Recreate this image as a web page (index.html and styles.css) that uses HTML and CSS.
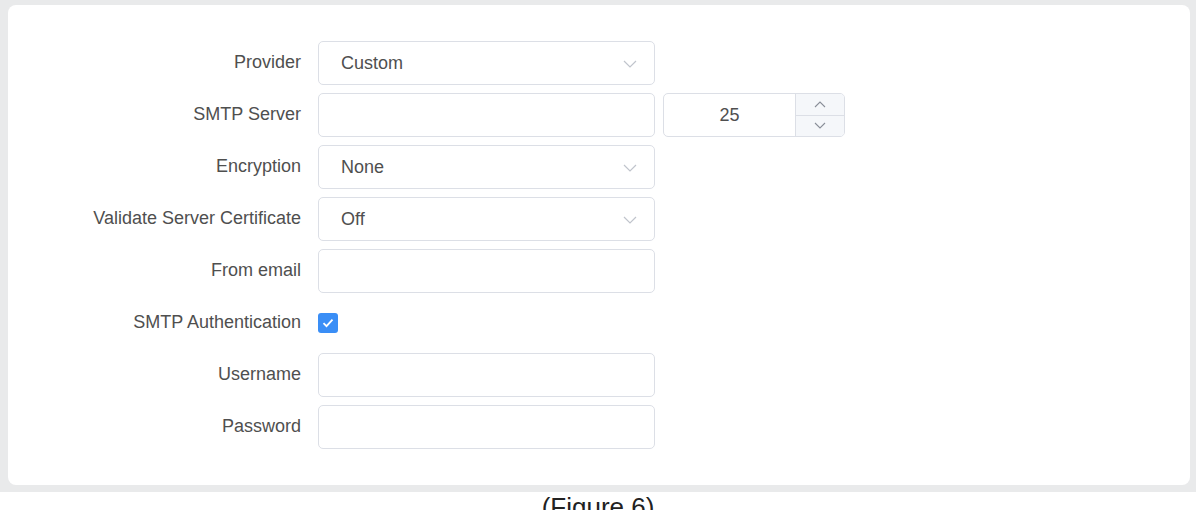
FILE: index.html
```html
<!DOCTYPE html>
<html lang="en">
<head>
    <meta charset="UTF-8">
    <title>SMTP Settings</title>
    <link rel="stylesheet" href="styles.css">
</head>
<body>
<div class="frame">
    <div class="card">
        <form class="form">
            <label class="label">Provider</label>
            <div class="field select">
                <span>Custom</span>
                <svg class="chev" width="14" height="8" viewBox="0 0 14 8"><path d="M1 1l6 6 6-6" fill="none" stroke="#c0c4cc" stroke-width="1.2"/></svg>
            </div>

            <label class="label">SMTP Server</label>
            <div class="row">
                <div class="field wide"></div>
                <div class="field port">
                    <span class="port-val">25</span>
                    <div class="spin">
                        <div class="spin-btn">
                            <svg width="12" height="7" viewBox="0 0 12 7"><path d="M1 6l5-5 5 5" fill="none" stroke="#8a8f99" stroke-width="1.1"/></svg>
                        </div>
                        <div class="spin-btn">
                            <svg width="12" height="7" viewBox="0 0 12 7"><path d="M1 1l5 5 5-5" fill="none" stroke="#8a8f99" stroke-width="1.1"/></svg>
                        </div>
                    </div>
                </div>
            </div>

            <label class="label">Encryption</label>
            <div class="field select">
                <span>None</span>
                <svg class="chev" width="14" height="8" viewBox="0 0 14 8"><path d="M1 1l6 6 6-6" fill="none" stroke="#c0c4cc" stroke-width="1.2"/></svg>
            </div>

            <label class="label">Validate Server Certificate</label>
            <div class="field select">
                <span>Off</span>
                <svg class="chev" width="14" height="8" viewBox="0 0 14 8"><path d="M1 1l6 6 6-6" fill="none" stroke="#c0c4cc" stroke-width="1.2"/></svg>
            </div>

            <label class="label">From email</label>
            <div class="field"></div>

            <label class="label">SMTP Authentication</label>
            <div class="check-cell">
                <span class="check">
                    <svg width="12" height="10" viewBox="0 0 12 10"><path d="M1.5 5.2l3 3 6-6.5" fill="none" stroke="#fff" stroke-width="1.8"/></svg>
                </span>
            </div>

            <label class="label">Username</label>
            <div class="field"></div>

            <label class="label">Password</label>
            <div class="field"></div>
        </form>
    </div>
</div>
<p class="caption">(Figure 6)</p>
</body>
</html>
```

FILE: styles.css
```css
body {
    margin: 0;
    background: #fff;
    font-family: "Liberation Sans", Arial, Helvetica, sans-serif;
    color: #555;
}

.frame {
    background: #e9eaeb;
    padding: 5px 6px 7px 8px;
}

.card {
    background: #fff;
    border-radius: 8px;
    padding: 36px 0 36px 0;
}

.form {
    display: grid;
    grid-template-columns: 293px auto;
    grid-auto-rows: 44px;
    column-gap: 17px;
    row-gap: 8px;
    align-items: center;
}

.label {
    text-align: right;
    font-size: 18px;
    color: #4f4f4f;
    margin-top: -2px;
}

.field {
    width: 337px;
    height: 44px;
    box-sizing: border-box;
    border: 1px solid #dcdfe6;
    border-radius: 5px;
    background: #fff;
    font-size: 18px;
    color: #4f4f4f;
}

.select {
    display: flex;
    align-items: center;
    justify-content: space-between;
    padding: 0 17px 0 22px;
}

.chev {
    margin-top: 1px;
}

.row {
    display: flex;
    gap: 8px;
}

.port {
    width: 182px;
    display: flex;
    overflow: hidden;
}

.port-val {
    flex: 1;
    display: flex;
    align-items: center;
    justify-content: center;
}

.spin {
    width: 48px;
    display: flex;
    flex-direction: column;
    border-left: 1px solid #dcdfe6;
    background: #f5f7fa;
}

.spin-btn {
    flex: 1;
    display: flex;
    align-items: center;
    justify-content: center;
}

.spin-btn + .spin-btn {
    border-top: 1px solid #dcdfe6;
}

.check-cell {
    display: flex;
    align-items: center;
}

.check {
    width: 20px;
    height: 20px;
    border-radius: 3px;
    background: #3a8ef6;
    display: flex;
    align-items: center;
    justify-content: center;
}

.caption {
    margin: 0;
    text-align: center;
    font-size: 26px;
    color: #222;
}
```
